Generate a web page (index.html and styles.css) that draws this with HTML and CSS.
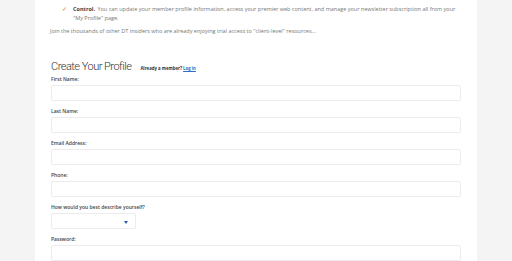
FILE: index.html
```html
<!DOCTYPE html>
<html lang="en">
<head>
    <meta charset="UTF-8">
    <meta name="viewport" content="width=device-width, initial-scale=1.0">
    <title>Create Your Profile</title>
    <link rel="stylesheet" href="styles.css">
</head>
<body>
    <div class="container">
        <ul class="perks">
            <li><span class="check">&#10003;</span><b>Control.</b> You can update your member profile information, access your premier web content, and manage your newsletter subscription all from your "My Profile" page.</li>
        </ul>
        <p class="intro">Join the thousands of other DT insiders who are already enjoying trial access to "client-level" resources...</p>

        <div class="form-head">
            <h1>Create Your Profile</h1>
            <span class="member">Already a member? <a href="#">Log in</a></span>
        </div>

        <form class="profile-form">
            <div class="field">
                <label for="first-name">First Name:</label>
                <input type="text" id="first-name">
            </div>
            <div class="field">
                <label for="last-name">Last Name:</label>
                <input type="text" id="last-name">
            </div>
            <div class="field">
                <label for="email">Email Address:</label>
                <input type="text" id="email">
            </div>
            <div class="field">
                <label for="phone">Phone:</label>
                <input type="text" id="phone">
            </div>
            <div class="field">
                <label for="describe">How would you best describe yourself?</label>
                <div class="select" id="describe">
                    <span class="arrow"></span>
                </div>
            </div>
            <div class="field">
                <label for="password">Password:</label>
                <input type="password" id="password">
            </div>
        </form>
    </div>
</body>
</html>
```

FILE: styles.css
```css
* {
    margin: 0;
    padding: 0;
    box-sizing: border-box;
}

body {
    font-family: "Open Sans", sans-serif;
    color: #777;
    background: #f4f4f4;
    overflow: hidden;
}

.container {
    width: 442px;
    margin: 0 auto;
    background: white;
    padding: 5px 16px 0;
    min-height: 261px;
}

.perks {
    list-style: none;
    padding-left: 22px;
    font-size: 5.5px;
    line-height: 9px;
}

.perks li {
    position: relative;
}

.check {
    position: absolute;
    left: -11px;
    top: 0;
    color: #f05a28;
    font-size: 6px;
}

.perks b {
    color: #444;
    font-weight: 700;
    margin-right: 1px;
}

.intro {
    margin-top: 4px;
    margin-left: -1px;
    font-size: 5.5px;
    line-height: 9px;
}

.form-head {
    display: flex;
    align-items: baseline;
    gap: 9px;
    margin-top: 25px;
    margin-bottom: 2px;
}

.form-head h1 {
    font-family: Roboto, sans-serif;
    font-weight: 300;
    font-size: 11px;
    letter-spacing: -0.5px;
    line-height: 12px;
    color: #333;
}

.member {
    font-size: 4.3px;
    font-weight: 700;
    color: #333;
}

.member a {
    color: #2a6fc9;
}

.field {
    margin-bottom: 6px;
}

.field label {
    display: block;
    font-size: 5px;
    font-weight: 600;
    line-height: 8px;
    color: #444;
    margin-bottom: 2px;
}

.field input,
.select {
    display: block;
    width: 100%;
    height: 16px;
    border: 1px solid #ececec;
    border-radius: 2px;
    background: white;
}

.select {
    width: 85px;
    position: relative;
}

.arrow {
    position: absolute;
    right: 7px;
    top: 7px;
    border-left: 2px solid transparent;
    border-right: 2px solid transparent;
    border-top: 3px solid #2a5fb0;
}
```
